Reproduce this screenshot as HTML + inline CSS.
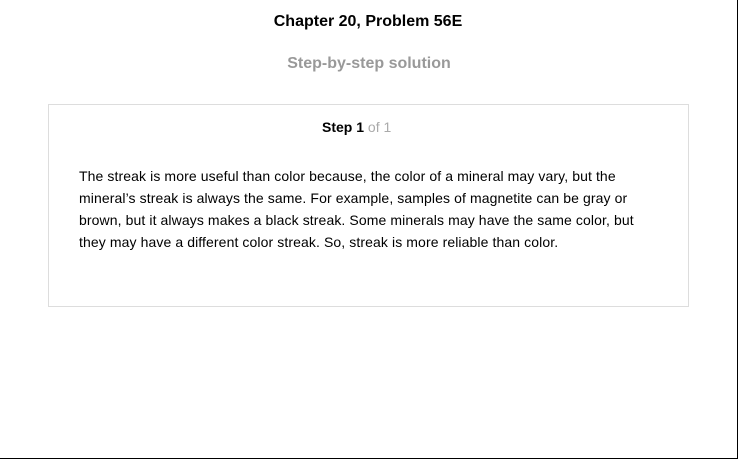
<!DOCTYPE html>
<html><head><style>
html,body{margin:0;padding:0}
body{width:738px;height:459px;position:relative;background:#fff;font-family:"Liberation Sans",Arial,sans-serif;overflow:hidden}
.frame{position:absolute;left:0;top:0;width:737px;height:458px;border-right:1px solid #000;border-bottom:1px solid #000}
h1{position:absolute;top:12px;left:-1px;width:738px;margin:0;text-align:center;font-size:16px;font-weight:bold;color:#000;line-height:20px}
h2{position:absolute;top:54px;left:0;width:738px;margin:0;text-align:center;font-size:16px;font-weight:bold;color:#999;line-height:20px}
.box{position:absolute;left:48px;top:104px;width:639px;height:201px;border:1px solid #ddd}
.step{position:absolute;top:14px;left:273px;white-space:nowrap;font-size:14px;line-height:16px}
.step b{color:#000}.step span{color:#aaa}
p{position:absolute;left:30px;top:60px;width:580px;margin:0;font-size:14px;line-height:22px;color:#000;letter-spacing:0.1px}
</style></head><body>
<div class="frame"></div>
<h1>Chapter 20, Problem 56E</h1>
<h2>Step-by-step solution</h2>
<div class="box">
<div class="step"><b>Step 1</b> <span>of 1</span></div>
<p>The streak is more useful than color because, the color of a mineral may vary, but the<br>mineral’s streak is always the same. For example, samples of magnetite can be gray or<br>brown, but it always makes a black streak. Some minerals may have the same color, but<br>they may have a different color streak. So, streak is more reliable than color.</p>
</div>
</body></html>
